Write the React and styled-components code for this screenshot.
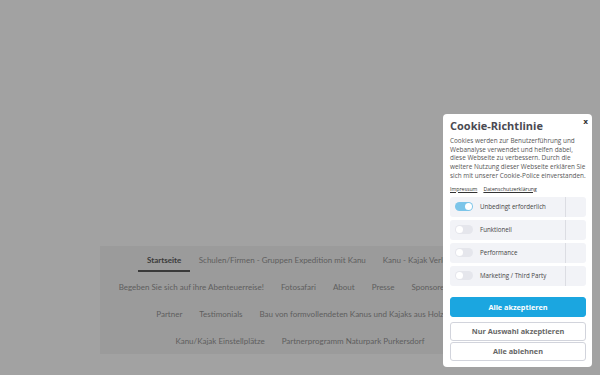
import React from 'react';
import styled, { createGlobalStyle } from 'styled-components';

const GlobalStyle = createGlobalStyle`
  html, body {
    margin: 0;
    padding: 0;
    background: #a2a2a2;
  }
  * {
    box-sizing: border-box;
  }
`;

const Page = styled.div`
  width: 600px;
  height: 375px;
  position: relative;
  overflow: hidden;
  background: #a2a2a2;
  padding-top: 246px;
`;

const Nav = styled.nav`
  width: 400px;
  margin: 0 auto;
  background: #9b9b9b;
  display: flex;
  flex-wrap: wrap;
  justify-content: center;
  font-family: "Lato", "Liberation Sans", sans-serif;
  font-size: 8px;
`;

const NavItem = styled.a`
  position: relative;
  height: 27px;
  padding: 0 ${p => (p.active ? '9px' : '8.5px')};
  display: flex;
  align-items: center;
  white-space: nowrap;
  color: ${p => (p.active ? '#3a3a3a' : '#5e5e5e')};
  font-weight: ${p => (p.active ? 700 : 400)};

  &:after {
    content: "";
    display: ${p => (p.active ? 'block' : 'none')};
    position: absolute;
    left: 0;
    right: 0;
    bottom: 1px;
    height: 2px;
    background: #3a3a3a;
  }
`;

const Modal = styled.div`
  position: absolute;
  left: 443px;
  top: 114px;
  width: 149px;
  height: 253px;
  background: #fff;
  border-radius: 4px;
  padding: 5px 6px 0 7px;
  font-family: "Open Sans", "DejaVu Sans", sans-serif;
  display: flex;
  flex-direction: column;
`;

const Close = styled.span`
  position: absolute;
  top: 3px;
  right: 4px;
  font-family: "DejaVu Sans", sans-serif;
  font-size: 7.5px;
  font-weight: 700;
  color: #333;
`;

const Title = styled.h2`
  margin: 0;
  font-size: 11px;
  font-weight: 700;
  color: #4a4a52;
  line-height: 14px;
`;

const Text = styled.p`
  margin: 4px 0 0;
  font-size: 6.4px;
  line-height: 8.7px;
  color: #555;
`;

const Links = styled.div`
  margin-top: 4px;
  display: flex;
  gap: 6px;
  font-size: 5.2px;
  color: #333;
`;

const Link = styled.a`
  text-decoration: underline;
`;

const Options = styled.div`
  margin-top: 4px;
  display: flex;
  flex-direction: column;
  gap: 3px;
`;

const Option = styled.div`
  height: 20px;
  display: flex;
  align-items: center;
  background: #f2f3f7;
  border-radius: 3px;
  padding-left: 5px;
  font-size: 6.2px;
  color: #444;
`;

const Toggle = styled.span`
  position: relative;
  width: 18px;
  height: 9px;
  border-radius: 5px;
  background: ${p => (p.on ? '#7cc5e9' : '#e5e6ec')};
  margin-right: 7px;
  flex: none;

  &:after {
    content: "";
    position: absolute;
    top: 1px;
    left: ${p => (p.on ? '10px' : '1px')};
    width: 7px;
    height: 7px;
    border-radius: 50%;
    background: #fff;
  }
`;

const Label = styled.span`
  flex: 1;
`;

const Divider = styled.span`
  width: 1px;
  align-self: stretch;
  background: #dcdde3;
  margin-right: 20px;
`;

const Buttons = styled.div`
  margin-top: 11px;
  display: flex;
  flex-direction: column;
`;

const Button = styled.button`
  height: ${p => (p.primary ? '20px' : '19px')};
  margin-bottom: ${p => (p.primary ? '5px' : '1px')};
  border-radius: 3px;
  border: 1px solid ${p => (p.primary ? '#1ba6e0' : '#d2d4dc')};
  background: ${p => (p.primary ? '#1ba6e0' : '#fff')};
  color: ${p => (p.primary ? '#fff' : '#666')};
  font-family: "Open Sans", "DejaVu Sans", sans-serif;
  font-size: 7.3px;
  font-weight: 700;
  padding: 0;
  cursor: pointer;
`;

const menu = [
  'Schulen/Firmen - Gruppen Expedition mit Kanu',
  'Kanu - Kajak Verleih',
  'Begeben Sie sich auf ihre Abenteuerreise!',
  'Fotosafari',
  'About',
  'Presse',
  'Sponsoren',
  'Blog',
  'Partner',
  'Testimonials',
  'Bau von formvollendeten Kanus und Kajaks aus Holz',
  'Kanu/Kajak Einstellplätze',
  'Partnerprogramm Naturpark Purkersdorf',
];

const options = [
  { label: 'Unbedingt erforderlich', on: true },
  { label: 'Funktionell' },
  { label: 'Performance' },
  { label: 'Marketing / Third Party' },
];

export default function App() {
  return (
    <Page>
      <GlobalStyle />
      <Nav>
        <NavItem active>Startseite</NavItem>
        {menu.map(item => (
          <NavItem key={item}>{item}</NavItem>
        ))}
      </Nav>
      <Modal>
        <Close>x</Close>
        <Title>Cookie-Richtlinie</Title>
        <Text>
          Cookies werden zur Benutzerführung und Webanalyse verwendet und helfen dabei,
          diese Webseite zu verbessern. Durch die weitere Nutzung dieser Webseite erklären Sie
          sich mit unserer Cookie-Police einverstanden.
        </Text>
        <Links>
          <Link>Impressum</Link>
          <Link>Datenschutzerklärung</Link>
        </Links>
        <Options>
          {options.map(o => (
            <Option key={o.label}>
              <Toggle on={o.on} />
              <Label>{o.label}</Label>
              <Divider />
            </Option>
          ))}
        </Options>
        <Buttons>
          <Button primary>Alle akzeptieren</Button>
          <Button>Nur Auswahl akzeptieren</Button>
          <Button>Alle ablehnen</Button>
        </Buttons>
      </Modal>
    </Page>
  );
}
